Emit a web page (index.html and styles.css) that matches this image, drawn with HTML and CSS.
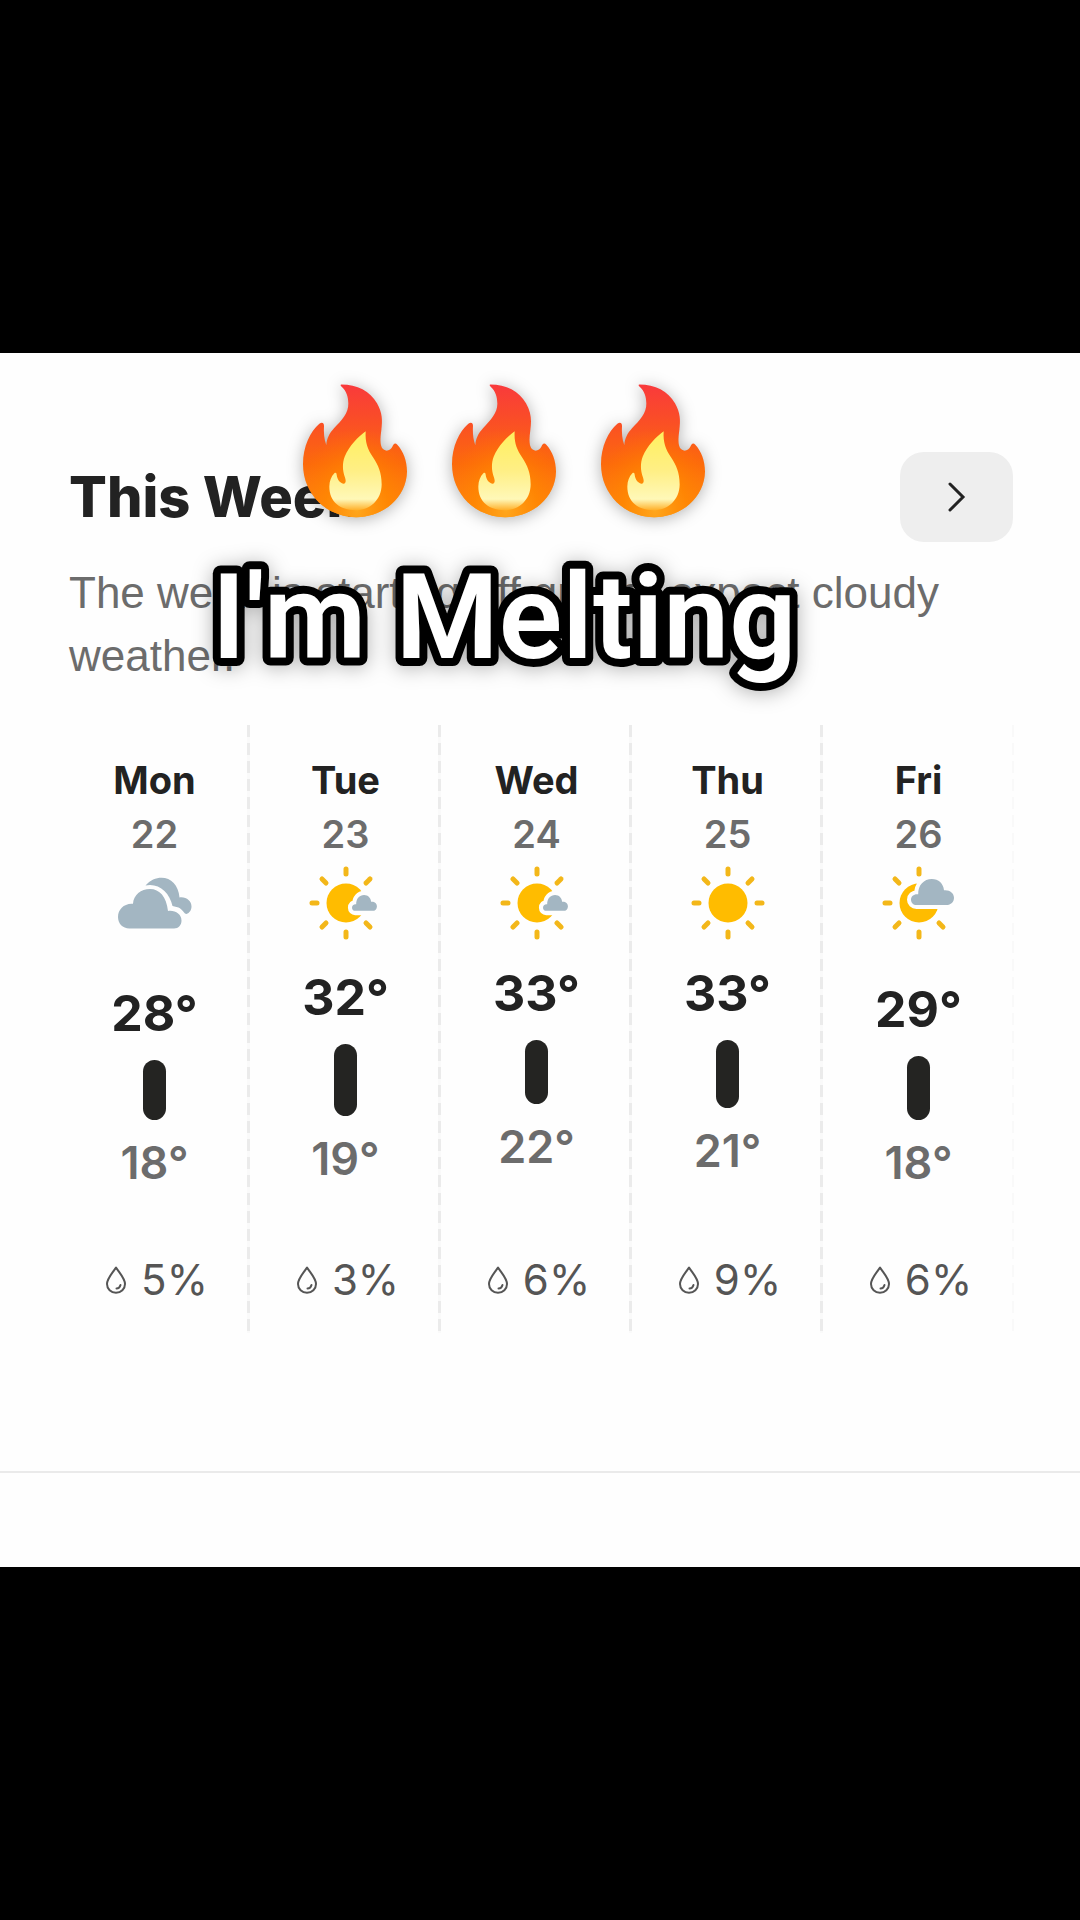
FILE: index.html
```html
<!DOCTYPE html>
<html lang="en">
<head>
    <meta charset="UTF-8">
    <meta name="viewport" content="width=device-width, initial-scale=1.0">
    <title>This Week</title>
    <link rel="stylesheet" href="styles.css">
</head>
<body>

<!-- shared shapes -->
<svg class="defs" aria-hidden="true">
    <defs>
        <linearGradient id="outer" x1="0" y1="0" x2="0" y2="1">
            <stop offset="0" stop-color="#f93a3c"/>
            <stop offset=".25" stop-color="#fa4c28"/>
            <stop offset=".6" stop-color="#fc6a0c"/>
            <stop offset="1" stop-color="#ff9512"/>
        </linearGradient>
        <radialGradient id="glow" cx=".52" cy=".95" r=".62">
            <stop offset="0" stop-color="#ffa61c"/>
            <stop offset=".5" stop-color="#ff8600" stop-opacity=".8"/>
            <stop offset="1" stop-color="#ff7000" stop-opacity="0"/>
        </radialGradient>
        <linearGradient id="inner" x1="0" y1="0" x2="0" y2="1">
            <stop offset="0" stop-color="#fff05e"/>
            <stop offset=".5" stop-color="#ffef85"/>
            <stop offset=".86" stop-color="#fff8b8"/>
            <stop offset="1" stop-color="#ffb02a"/>
        </linearGradient>
        <path id="flame" d="M184 46C232 46 270 66 291 102C307 130 308 152 304 183C301 206 299 226 308 239C318 249 332 244 337 233C340 225 345 219 352 227C370 247 381 275 381 307C380 384 310 444 229 444C142 444 69 376 69 285C69 232 91 187 118 164C126 157 132 161 132 170C131 190 132 210 139 228C140 208 148 192 162 177C185 153 206 132 205 102C204 82 200 67 185 53C181 49 181 46 184 46Z"/>
        <path id="core" d="M257 186C255 220 263 240 279 264C295 288 305 310 305 345C305 392 270 423 226 423C180 423 148 398 148 352C148 335 154 321 163 312C167 309 170 311 170 317C172 331 179 341 190 344C197 343 199 337 195 325C187 304 187 281 194 263C207 229 235 203 257 186Z"/>
        <symbol id="fire" viewBox="60 36 330 416">
            <use href="#flame" fill="url(#outer)"/>
            <use href="#flame" fill="url(#glow)"/>
            <use href="#core" fill="url(#inner)"/>
        </symbol>
        <g id="rays" stroke="#f3b719" stroke-width="5" stroke-linecap="round">
            <path d="M40 6v5M40 69v5M6 40h5M16 16l4 4M60 60l4 4M16 64l4-4"/>
        </g>
        <path id="ray-ne" d="M64 16l-4 4" stroke="#f3b719" stroke-width="5" stroke-linecap="round"/>
        <path id="ray-e" d="M69 40h5" stroke="#f3b719" stroke-width="5" stroke-linecap="round"/>
        <path id="puff" d="M5.500 26C2.300 26 0 23.700 0 20.700C0 17.500 2.600 15.200 5.900 15.200H7.200C7 6 13 0 20.800 0C27.600 0 32.400 4.600 33 11.200C38.700 10.600 43 14 43 18.700C43 23 39.800 26 35.500 26Z"/>
        <symbol id="sun" viewBox="0 0 80 80">
            <use href="#rays"/>
            <use href="#ray-ne"/>
            <use href="#ray-e"/>
            <circle cx="40" cy="40" r="19.500" fill="#ffbc00"/>
        </symbol>
        <symbol id="mostly-sun" viewBox="0 0 80 80">
            <use href="#rays"/>
            <use href="#ray-ne"/>
            <circle cx="40" cy="40" r="19.500" fill="#ffbc00"/>
            <use href="#puff" transform="translate(46 32) scale(.58 .61)" fill="#fefefe" stroke="#fefefe" stroke-width="14"/>
            <use href="#puff" transform="translate(46 32) scale(.58 .61)" fill="#a3b6c2"/>
        </symbol>
        <symbol id="partly-sun" viewBox="0 0 80 80">
            <use href="#rays"/>
            <circle cx="40" cy="40" r="19.500" fill="#ffbc00"/>
            <use href="#puff" transform="translate(32 16)" fill="#fefefe" stroke="#fefefe" stroke-width="8"/>
            <use href="#puff" transform="translate(32 16)" fill="#a3b6c2"/>
        </symbol>
        <symbol id="cloudy" viewBox="0 0 80 80">
            <path d="M30.500 22.500C35 17 41 14.700 46.500 14.700C56 14.700 63.500 22 64.500 34.500C71 33.500 76.500 38 76.500 43.500C76.500 47 74.500 50 71.500 51C69 51 67.500 46 63.500 44.500L57.500 43C55 31 46 22 35 22Z" fill="#a3b6c2"/>
            <path d="M14.500 65.500C7.500 65.500 3 60.500 3 54C3 46.500 8.500 41 16.500 40.700H18C18.500 32 26 26 35 26C44.500 26 51.500 33.500 53 48C60 47 66.500 51 66.500 57.500C66.500 62 63.500 65.500 59 65.500Z" fill="#a3b6c2"/>
        </symbol>
        <symbol id="drop" viewBox="0 0 22 30">
            <path d="M11 2.500C7.500 8 2 13.500 2 19C2 24 6 27.700 11 27.700S20 24 20 19C20 13.500 14.500 8 11 2.500Z" fill="none" stroke="#555" stroke-width="2" stroke-linejoin="round"/>
            <path d="M11.500 23.500c2 0 3.500-1.500 4-3.500" fill="none" stroke="#555" stroke-width="2" stroke-linecap="round"/>
        </symbol>
    </defs>
</svg>

<main class="card">
    <header class="cardHeader">
        <h1>This Week</h1>
        <button class="btnNext" type="button" aria-label="Next">
            <svg viewBox="0 0 18 30"><path d="M2 2l13 13L2 28"/></svg>
        </button>
    </header>
    <p class="summary">The week is starting off grand, expect cloudy weather.</p>

    <div class="week">
        <section class="day">
            <h2>Mon</h2>
            <span class="date">22</span>
            <svg class="icon"><use href="#cloudy"/></svg>
            <div class="range" style="padding-top: 20px">
                <span class="high">28°</span>
                <div class="bar" style="height: 60px"></div>
                <span class="low">18°</span>
            </div>
            <div class="rain"><svg><use href="#drop"/></svg>5%</div>
        </section>
        <section class="day">
            <h2>Tue</h2>
            <span class="date">23</span>
            <svg class="icon"><use href="#mostly-sun"/></svg>
            <div class="range" style="padding-top: 4px">
                <span class="high">32°</span>
                <div class="bar" style="height: 72px"></div>
                <span class="low">19°</span>
            </div>
            <div class="rain"><svg><use href="#drop"/></svg>3%</div>
        </section>
        <section class="day">
            <h2>Wed</h2>
            <span class="date">24</span>
            <svg class="icon"><use href="#mostly-sun"/></svg>
            <div class="range" style="padding-top: 0px">
                <span class="high">33°</span>
                <div class="bar" style="height: 64px"></div>
                <span class="low">22°</span>
            </div>
            <div class="rain"><svg><use href="#drop"/></svg>6%</div>
        </section>
        <section class="day">
            <h2>Thu</h2>
            <span class="date">25</span>
            <svg class="icon"><use href="#sun"/></svg>
            <div class="range" style="padding-top: 0px">
                <span class="high">33°</span>
                <div class="bar" style="height: 68px"></div>
                <span class="low">21°</span>
            </div>
            <div class="rain"><svg><use href="#drop"/></svg>9%</div>
        </section>
        <section class="day">
            <h2>Fri</h2>
            <span class="date">26</span>
            <svg class="icon"><use href="#partly-sun"/></svg>
            <div class="range" style="padding-top: 16px">
                <span class="high">29°</span>
                <div class="bar" style="height: 64px"></div>
                <span class="low">18°</span>
            </div>
            <div class="rain"><svg><use href="#drop"/></svg>6%</div>
        </section>
    </div>

    <hr>

    <div class="caption">
        <div class="fires">
            <svg><use href="#fire"/></svg>
            <svg><use href="#fire"/></svg>
            <svg><use href="#fire"/></svg>
        </div>
        <svg class="captionText"><text x="50%" y="138" text-anchor="middle">I'm Melting</text></svg>
    </div>
</main>

</body>
</html>
```
FILE: styles.css
```css
* {
    margin: 0px;
    padding: 0px;
    box-sizing: border-box;
}
body {
    font-family: Inter, "Liberation Sans", sans-serif;
    background-color: #000;
    color: #222;
    min-height: 100vh;
    display: flex;
    flex-direction: column;
    justify-content: center;
}
.defs {
    position: absolute;
    width: 0;
    height: 0;
}
.card {
    position: relative;
    background-color: #fefefe;
    padding: 99px 0 94px;
}
.cardHeader {
    display: flex;
    justify-content: space-between;
    align-items: center;
    padding: 0 67px 0 69px;
}
h1 {
    font-size: 56px;
    line-height: 70px;
    font-weight: 800;
}
.btnNext {
    display: flex;
    justify-content: center;
    align-items: center;
    width: 113px;
    height: 90px;
    border: none;
    border-radius: 24px;
    background-color: #eee;
}
.btnNext svg {
    width: 18px;
    height: 30px;
}
.btnNext path {
    fill: none;
    stroke: #222;
    stroke-width: 3;
    stroke-linecap: round;
}
.summary {
    padding: 19px 69px 0;
    font-family: "Liberation Sans", Arial, sans-serif;
    font-size: 44px;
    line-height: 63px;
    color: #6c6c6c;
}
.week {
    display: grid;
    grid-template-columns: repeat(5, 1fr);
    margin: 38px 66px 0 59px;
    height: 608px;
}
.day {
    display: flex;
    flex-direction: column;
    align-items: center;
    padding-top: 28px;
    background: repeating-linear-gradient(#ebebeb 0 12px, #fafafa 12px 18px) right top / 3px 100% no-repeat;
}
.day:last-child {
    background: repeating-linear-gradient(#f9f9f9 0 12px, #fefefe 12px 18px) right top / 2px 100% no-repeat;
}
h2, .date {
    font-size: 38px;
    line-height: 54px;
    font-weight: 700;
}
.date {
    font-weight: 600;
    color: #6c6c6c;
}
.icon {
    width: 80px;
    height: 80px;
    margin-top: 2px;
}
.range {
    display: flex;
    flex-direction: column;
    align-items: center;
    height: 291px;
    margin-top: 19px;
}
.high {
    font-size: 50px;
    line-height: 62px;
    font-weight: 700;
}
.bar {
    width: 23px;
    margin: 16px 0;
    border-radius: 12px;
    background-color: #242422;
}
.low {
    font-size: 45px;
    line-height: 54px;
    font-weight: 600;
    color: #6c6c6c;
}
.rain {
    display: flex;
    align-items: center;
    gap: 14px;
    padding-left: 4px;
    font-size: 42px;
    line-height: 54px;
    color: #555;
}
.rain svg {
    width: 22px;
    height: 30px;
}
hr {
    margin-top: 138px;
    border: none;
    border-top: 2px solid #eaeaea;
}
/* sticker text over the forecast */
.caption {
    position: absolute;
    top: 28px;
    left: 0;
    right: 72px;
}
.fires {
    display: flex;
    justify-content: center;
    gap: 39px;
}
.fires svg {
    width: 110px;
    height: 139px;
    filter: drop-shadow(0 2px 8px rgba(0, 0, 0, .3));
}
.captionText {
    display: block;
    width: 100%;
    height: 200px;
    filter: drop-shadow(0 2px 10px rgba(0, 0, 0, .3));
}
.captionText text {
    font-family: Roboto, sans-serif;
    font-size: 118px;
    font-weight: 600;
    fill: #fff;
    stroke: #000;
    stroke-width: 16px;
    stroke-linejoin: round;
    paint-order: stroke fill;
}
```
